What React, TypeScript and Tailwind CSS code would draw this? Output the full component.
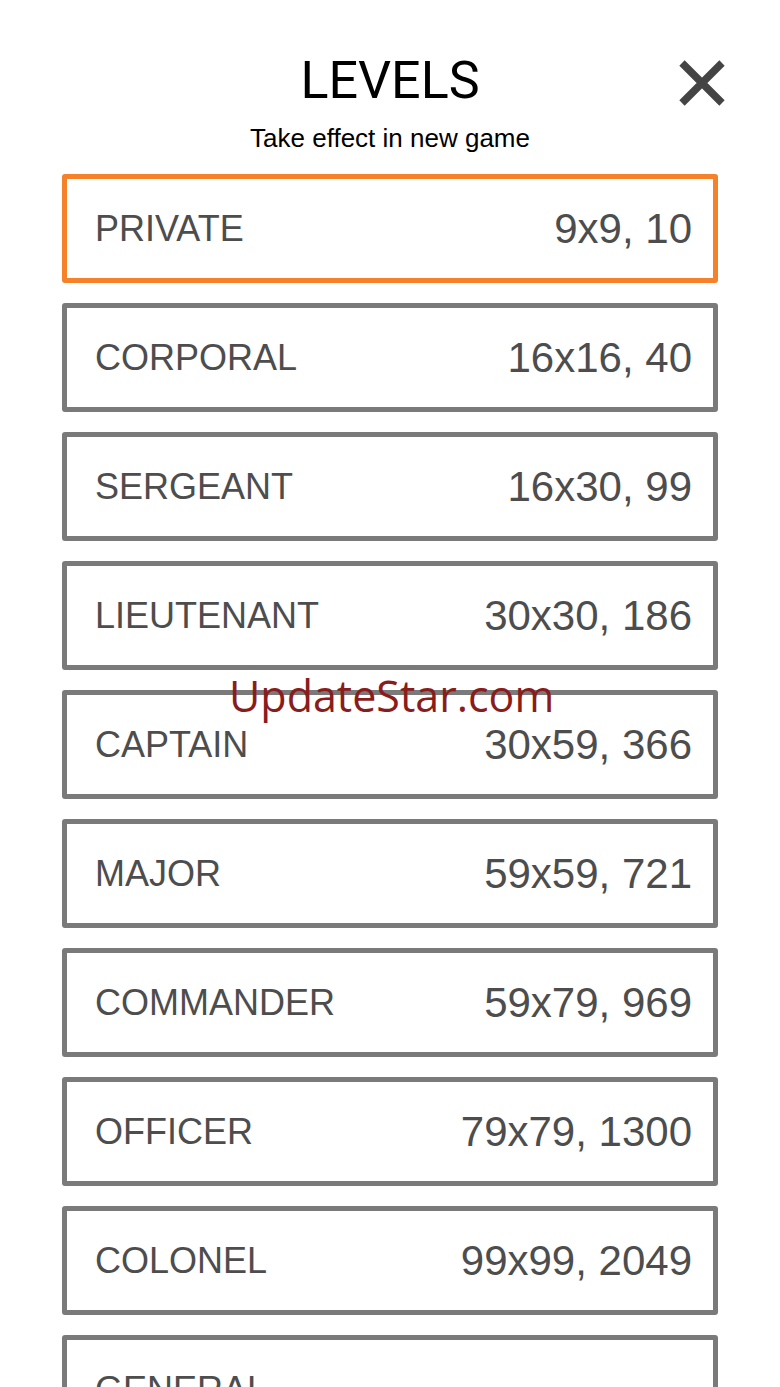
import { useState } from "react";

const LEVELS = [
  { name: "PRIVATE", size: "9x9, 10" },
  { name: "CORPORAL", size: "16x16, 40" },
  { name: "SERGEANT", size: "16x30, 99" },
  { name: "LIEUTENANT", size: "30x30, 186" },
  { name: "CAPTAIN", size: "30x59, 366" },
  { name: "MAJOR", size: "59x59, 721" },
  { name: "COMMANDER", size: "59x79, 969" },
  { name: "OFFICER", size: "79x79, 1300" },
  { name: "COLONEL", size: "99x99, 2049" },
  { name: "GENERAL", size: "" },
];

function CloseIcon() {
  return (
    <svg width="48" height="48" viewBox="0 0 48 48" className="text-[#444444]">
      <path d="M4 4 L44 44 M44 4 L4 44" stroke="currentColor" strokeWidth="7.5" strokeLinecap="butt" />
    </svg>
  );
}

export default function App() {
  const [selected, setSelected] = useState(0);

  return (
    <div className="relative w-[780px] h-[1387px] overflow-hidden bg-white font-['Liberation_Sans',Arial,sans-serif]">
      {/* Header */}
      <div className="relative flex flex-col items-center pt-[53px]">
        <h1 className="text-[52px] leading-[56px] font-normal text-black font-['Roboto',sans-serif]">LEVELS</h1>
        <p className="mt-[14px] text-[26px] leading-[30px] text-black">Take effect in new game</p>
        <button className="absolute right-[54px] top-[59px] p-0 bg-transparent border-none cursor-pointer">
          <CloseIcon />
        </button>
      </div>

      {/* Level list */}
      <div className="mt-[21px] flex flex-col items-center gap-[20px]">
        {LEVELS.map((lvl, i) => (
          <button
            key={lvl.name}
            onClick={() => setSelected(i)}
            className={
              i === selected
                ? "w-[656px] h-[109px] shrink-0 flex items-center justify-between pl-[28px] pr-[21px] border-[5px] border-[#f5822a] rounded-[3px] bg-white cursor-pointer"
                : "w-[656px] h-[109px] shrink-0 flex items-center justify-between pl-[28px] pr-[21px] border-[5px] border-[#7a7a7a] rounded-[3px] bg-white cursor-pointer"
            }
          >
            <span className="text-[36px] leading-none text-[#4d4d4d]">{lvl.name}</span>
            <span className="text-[42px] leading-none text-[#4d4d4d]">{lvl.size}</span>
          </button>
        ))}
      </div>

      {/* Watermark */}
      <div className="absolute left-[229px] top-[669px] text-[43px] leading-[54px] text-[#8a1c1c] font-['Open_Sans',sans-serif] pointer-events-none">
        UpdateStar.com
      </div>
    </div>
  );
}
